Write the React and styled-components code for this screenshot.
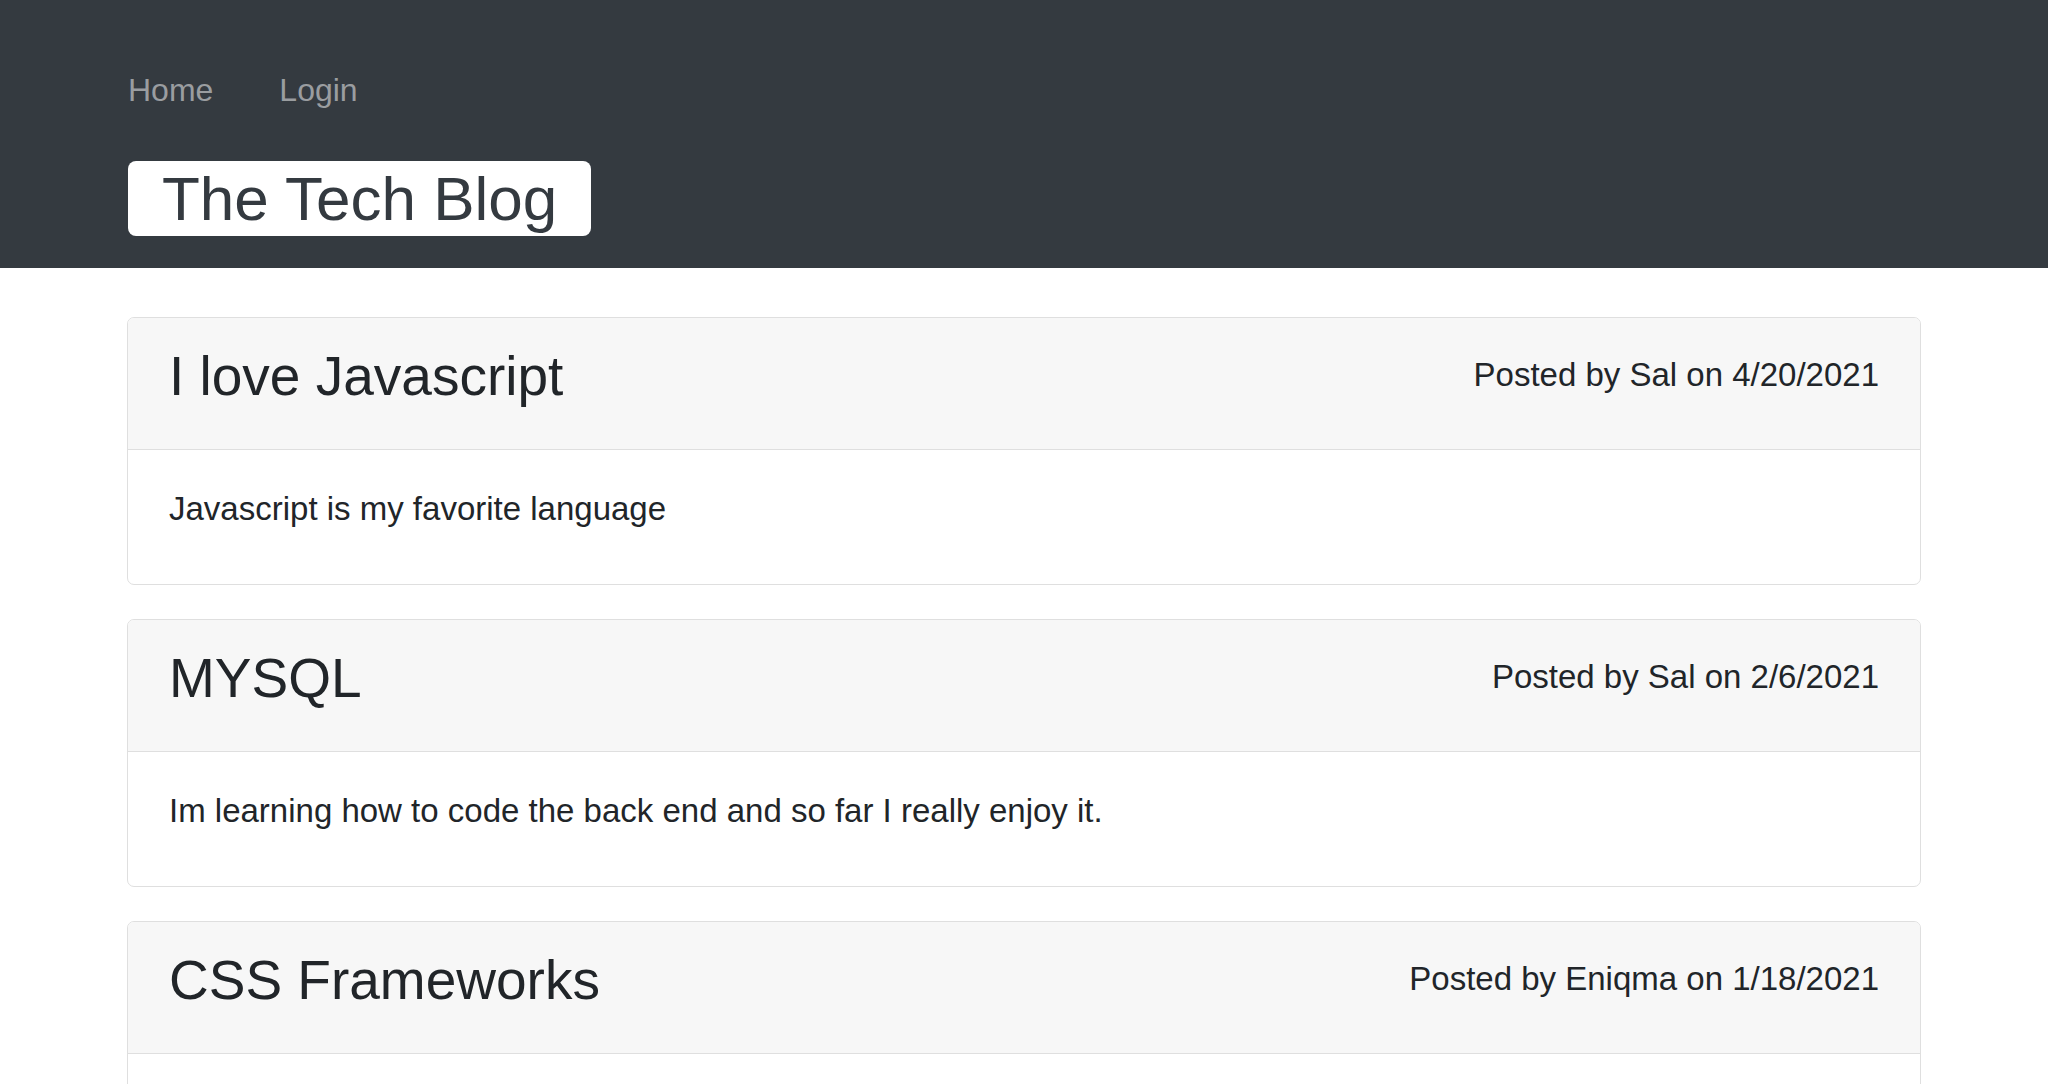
import React from "react";
import styled, { createGlobalStyle } from "styled-components";

const Global = createGlobalStyle`
  html, body { margin: 0; padding: 0; background: #ffffff; }
  body { font-family: "Liberation Sans", Arial, Helvetica, sans-serif; color: #212529; }
  * { box-sizing: border-box; }
`;

const Header = styled.header`
  background: #343a40;
  padding: 70px 128px 32px;
  display: flex;
  flex-direction: column;
  align-items: flex-start;
`;

const Nav = styled.nav`
  display: flex;
  gap: 66px;
  height: 40px;
`;

const NavLink = styled.a`
  font-size: 32px;
  line-height: 40px;
  color: #9a9da0;
  text-decoration: none;
  cursor: pointer;
`;

const Brand = styled.h1`
  margin: 51px 0 0;
  background: #ffffff;
  color: #343a40;
  font-size: 62px;
  font-weight: 400;
  line-height: 75px;
  height: 75px;
  padding: 0 34px;
  border-radius: 8px;
  white-space: nowrap;
`;

const Main = styled.main`
  padding: 49px 127px 40px;
  display: flex;
  flex-direction: column;
  gap: 34px;
`;

const Card = styled.article`
  border: 1px solid #dfdfdf;
  border-radius: 7px;
  overflow: hidden;
  background: #ffffff;
`;

const CardHeader = styled.div`
  background: #f7f7f7;
  border-bottom: 1px solid #dfdfdf;
  padding: 25px 41px 40px;
  display: flex;
  justify-content: space-between;
  align-items: flex-start;
  height: 132px;
`;

const PostTitle = styled.h2`
  margin: 0;
  font-size: 55px;
  font-weight: 400;
  line-height: 66px;
  color: #212529;
`;

const Meta = styled.span`
  font-size: 33px;
  line-height: 40px;
  margin-top: 12px;
  color: #212529;
  white-space: nowrap;
`;

const CardBody = styled.div`
  padding: 39px 41px 55px;
  min-height: 134px;
`;

const BodyText = styled.p`
  margin: 0;
  font-size: 33px;
  line-height: 40px;
  color: #212529;
`;

const posts = [
  {
    title: "I love Javascript",
    meta: "Posted by Sal on 4/20/2021",
    body: "Javascript is my favorite language",
  },
  {
    title: "MYSQL",
    meta: "Posted by Sal on 2/6/2021",
    body: "Im learning how to code the back end and so far I really enjoy it.",
  },
  {
    title: "CSS Frameworks",
    meta: "Posted by Eniqma on 1/18/2021",
    body: "",
  },
];

export default function App() {
  return (
    <>
      <Global />
      <Header>
        <Nav>
          <NavLink>Home</NavLink>
          <NavLink>Login</NavLink>
        </Nav>
        <Brand>The Tech Blog</Brand>
      </Header>
      <Main>
        {posts.map((p) => (
          <Card key={p.title}>
            <CardHeader>
              <PostTitle>{p.title}</PostTitle>
              <Meta>{p.meta}</Meta>
            </CardHeader>
            <CardBody>{p.body && <BodyText>{p.body}</BodyText>}</CardBody>
          </Card>
        ))}
      </Main>
    </>
  );
}
